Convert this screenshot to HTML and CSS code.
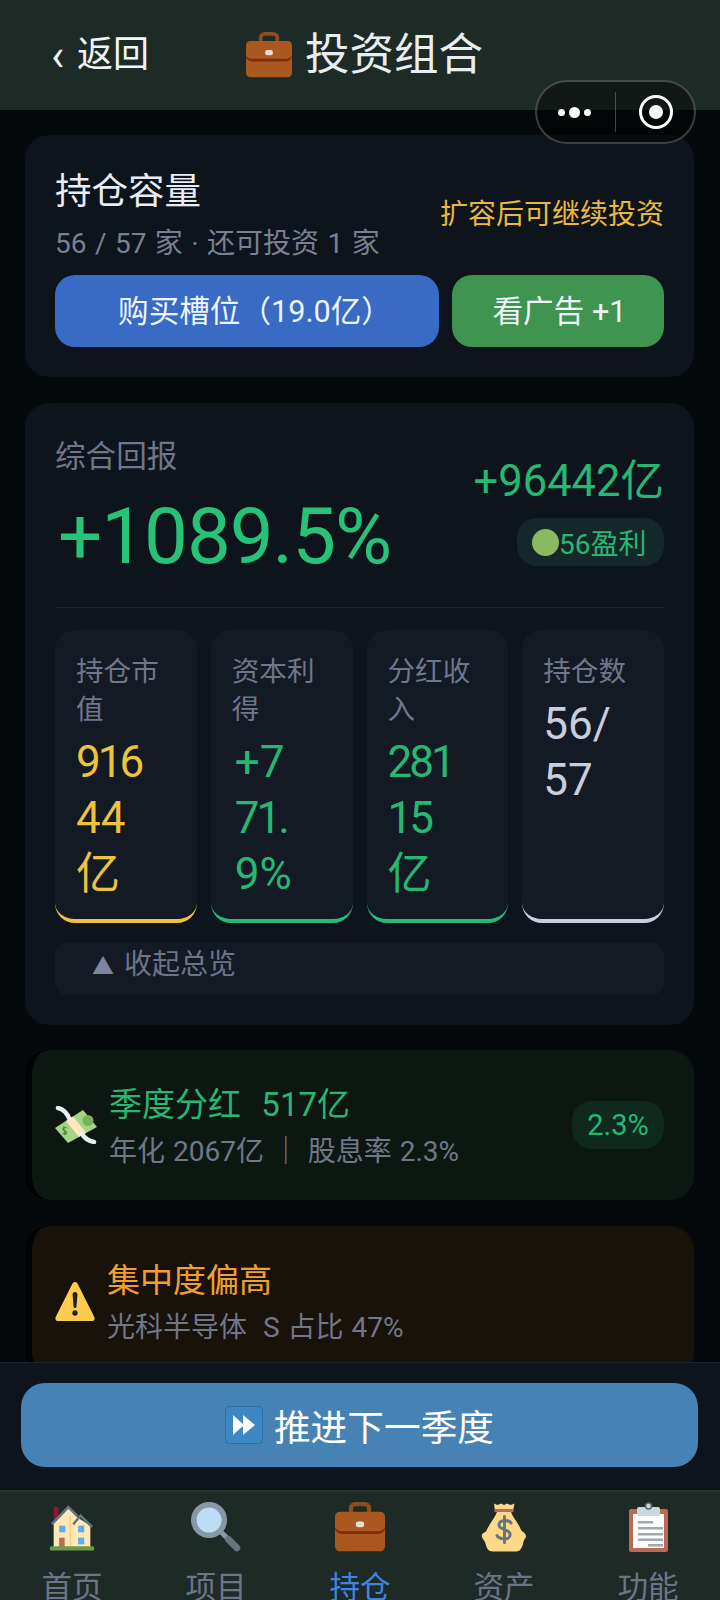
FILE: index.html
```html
<!DOCTYPE html>
<html lang="zh-CN">
<head>
<meta charset="utf-8">
<title>投资组合</title>
<link rel="stylesheet" href="styles.css">
</head>
<body>
<svg class="defs" width="0" height="0" aria-hidden="true">
  <symbol id="case" viewBox="0 0 36 36">
    <path fill="none" stroke="#8f4c1d" stroke-width="3" d="M11.5 9V4.5a3 3 0 0 1 3-3h7a3 3 0 0 1 3 3V9"/>
    <rect x="0" y="7" width="36" height="28.5" rx="3.5" fill="#a9591f"/>
    <path fill="#7c2c0b" d="M0 17v1.600c0 2.400 2 4.400 5 4.400h26c3 0 5-2 5-4.400V17c0 2.400-2 4-5 4H5c-3 0-5-1.600-5-4z"/>
    <rect x="15" y="14" width="6" height="4.200" rx="1.600" fill="#e8dcd2"/>
  </symbol>
</svg>

<div class="capsule">
  <div class="cap-dots"><i class="dot"></i><i class="dot dot-big"></i><i class="dot"></i></div>
  <i class="cap-line"></i>
  <div class="cap-target"><i class="cap-core"></i></div>
</div>

<header class="topbar">
  <div class="back"><span class="chev">‹</span>返回</div>
  <div class="title"><svg class="title-ico"><use href="#case"/></svg>投资组合</div>
</header>

<main class="scroll">
  <section class="card cap-card">
    <div class="cap-head">
      <div>
        <div class="cap-title">持仓容量</div>
        <div class="cap-sub">56 / 57 家 · 还可投资 1 家</div>
      </div>
      <div class="cap-note">扩容后可继续投资</div>
    </div>
    <div class="btns">
      <div class="btn btn-blue">购买槽位（19.0亿）</div>
      <div class="btn btn-green">看广告 +1</div>
    </div>
  </section>

  <section class="card sum-card">
    <div class="sum-head">
      <div>
        <div class="sum-label">综合回报</div>
        <div class="sum-big">+1089.5%</div>
      </div>
      <div class="sum-right">
        <div class="sum-amt">+96442亿</div>
        <div class="sum-pill"><i class="green-dot"></i>56盈利</div>
      </div>
    </div>
    <div class="stats">
      <div class="stat stat-gold"><div class="stat-l">持仓市<br>值</div><div class="stat-v v-gold"><span class="tight">916</span><br>44<br>亿</div></div>
      <div class="stat stat-green"><div class="stat-l">资本利<br>得</div><div class="stat-v v-green v-shift">+7<br><span class="tight">71.</span><br>9%</div></div>
      <div class="stat stat-green"><div class="stat-l">分红收<br>入</div><div class="stat-v v-green"><span class="tight">281</span><br><span class="tight">15</span><br>亿</div></div>
      <div class="stat stat-grey"><div class="stat-l">持仓数</div><div class="stat-v v-grey">56/<br>57</div></div>
    </div>
    <div class="toggle"><span class="tri">▲</span> 收起总览</div>
  </section>

  <section class="note note-green">
    <svg class="ico-money" viewBox="0 0 42 38">
      <path d="M0 22L28 4l14 17-29 16z" fill="#a6d388"/>
      <circle cx="33" cy="14.500" r="5.500" fill="#77b255"/>
      <path d="M11.500 22c-2-1.500-4.500 0-3 2 1.500 1.500 3.500 1 3 3-.5 1.500-3 1.500-4 0M8.500 20.500l1.500 8.500" fill="none" stroke="#4f8a35" stroke-width="1.300"/>
      <path d="M11 15l7-4.500L31 26.500 24 31z" fill="#ffe8b6"/>
      <path d="M14.500 13C12 7 8 3 3 2" fill="none" stroke="#e9eef2" stroke-width="4.500" stroke-linecap="round"/>
      <path d="M27 28c3 5 7 7 12 8" fill="none" stroke="#e9eef2" stroke-width="4.500" stroke-linecap="round"/>
    </svg>
    <div class="note-text">
      <div class="note-title t-green">季度分红&nbsp;&nbsp;517亿</div>
      <div class="note-sub">年化 2067亿 ｜ 股息率 2.3%</div>
    </div>
    <div class="rate">2.3%</div>
  </section>

  <section class="note note-amber">
    <svg class="ico-warn" viewBox="0 0 40 39">
      <path d="M20 0c1.300 0 2.200.8 2.900 2.300L39.300 35c.9 2-.2 4-2.300 4H3c-2.100 0-3.200-2-2.300-4L17.100 2.300C17.800.8 18.700 0 20 0z" fill="#ffcc4d"/>
      <path d="M17.600 12.500c0-1.500 1-2.500 2.400-2.500s2.400 1 2.400 2.500l-.9 12c-.1 1-.7 1.500-1.500 1.500s-1.400-.5-1.500-1.500z" fill="#231f20"/>
      <circle cx="20" cy="31" r="2.700" fill="#231f20"/>
    </svg>
    <div class="note-text">
      <div class="note-title t-amber">集中度偏高</div>
      <div class="note-sub">光科半导体&nbsp;&nbsp;S 占比 47%</div>
    </div>
  </section>
</main>

<div class="footer">
  <div class="next">
    <svg class="ico-ff" viewBox="0 0 38 38">
      <rect x=".5" y=".5" width="37" height="37" rx="4" fill="#3b88c3" stroke="#2f6ea3"/>
      <path d="M8 9l11 10-11 10z" fill="#fff"/>
      <path d="M18 9l12 10-12 10z" fill="#fff"/>
    </svg>
    <span>推进下一季度</span>
  </div>
</div>

<nav class="tabs">
  <div class="tab">
    <svg class="tab-ico ico-house" viewBox="0 0 36 36" preserveAspectRatio="none">
      <rect x="3" y="3" width="4" height="10" fill="#8f1634"/>
      <path d="M3 33V15L15 3l8 8 10 6v16z" fill="#ffe8b6"/>
      <rect x="16" y="10" width="1" height="23" fill="#ffcc7d"/>
      <path d="M1.500 16L15 3l7.500 7" fill="none" stroke="#66757f" stroke-width="2"/>
      <path d="M19 16l6-6.500L34.500 18" fill="none" stroke="#66757f" stroke-width="2"/>
      <rect x="7.500" y="17" width="5" height="5" fill="#5dadec"/>
      <rect x="23" y="17" width="5" height="5" fill="#5dadec"/>
      <rect x="23" y="26" width="5" height="5" fill="#5dadec"/>
      <rect x="7.500" y="26" width="4.500" height="7" fill="#c1694f"/>
      <rect x="0" y="32.500" width="36" height="3.200" rx="1" fill="#6a9c4b"/>
    </svg>
    <div class="tab-l">首页</div>
  </div>
  <div class="tab">
    <svg class="tab-ico ico-lens" viewBox="0 0 36 36">
      <path d="M22 22l4.500 4.500" stroke="#8899a6" stroke-width="3.500"/>
      <path d="M27 27l6 6" stroke="#66757f" stroke-width="5" stroke-linecap="round"/>
      <circle cx="13" cy="13" r="11" fill="#bbddf5" stroke="#8899a6" stroke-width="4"/>
    </svg>
    <div class="tab-l">项目</div>
  </div>
  <div class="tab">
    <svg class="tab-ico ico-case"><use href="#case"/></svg>
    <div class="tab-l tab-on">持仓</div>
  </div>
  <div class="tab">
    <svg class="tab-ico ico-bag" viewBox="0 0 46 50">
      <path d="M13 1.500l3.500 1.500 3.500-1.500 3 1.500 3-1.500 3.500 1.500 4-1.500-1.500 7.500H14z" fill="#fdd888"/>
      <rect x="13.500" y="7" width="19" height="3" fill="#bf6952"/>
      <path d="M16 10h14c2 6 7 10 10 18 1 1.500 5 3 5 6.500 0 1.500-2 3-2.500 5s-.5 4-2.500 7c-1 2-2.500 3-5 3H12c-3 0-5-1-6-3.500-1.500-3-1-5-3-7.500-2-2.500-2.500-4-2-6 .5-1.500 3-2 4-3C8 22 14 16 16 10z" fill="#fdd888"/>
      <path d="M30 21c-1.500-3-11-4-12 1.500-1 5.500 12.500 4.500 11 11-1 5-11 4-13 0M23.500 14.500v26" fill="none" stroke="#67757f" stroke-width="3" stroke-linecap="round"/>
    </svg>
    <div class="tab-l">资产</div>
  </div>
  <div class="tab">
    <svg class="tab-ico ico-clip" viewBox="0 0 39 50">
      <rect x="0" y="7" width="39" height="43" rx="2" fill="#bd6a55"/>
      <rect x="4" y="12" width="31" height="34" fill="#fff"/>
      <rect x="8" y="5" width="23" height="9" rx="2" fill="#ccd6dd"/>
      <circle cx="19.500" cy="4" r="3" fill="#ccd6dd" stroke="#55646e" stroke-width="1.500"/>
      <rect x="9" y="19" width="15" height="2.500" fill="#99aab5"/>
      <rect x="9" y="25" width="25" height="2.500" fill="#99aab5"/>
      <rect x="9" y="31" width="25" height="2.500" fill="#99aab5"/>
      <rect x="9" y="36.500" width="25" height="2.500" fill="#99aab5"/>
      <rect x="19" y="42" width="15" height="2.500" fill="#99aab5"/>
    </svg>
    <div class="tab-l">功能</div>
  </div>
</nav>
</body>
</html>
```

FILE: styles.css
```css
* { box-sizing: border-box; }
html, body { margin: 0; padding: 0; }
body {
  position: relative;
  width: 720px;
  height: 1600px;
  overflow: hidden;
  display: flex;
  flex-direction: column;
  background: #05090c;
  color: #e8ecf2;
  font-family: Roboto, "Noto Sans CJK SC", sans-serif;
}
i { display: block; }
.defs { position: absolute; }

/* top bar */
.topbar {
  flex: none;
  height: 110px;
  background: #1e2a25;
  display: flex;
  align-items: center;
  padding: 0 0 0 51px;
}
.back { width: 195px; font-size: 36px; line-height: 50px; color: #f2f5f7; display: flex; align-items: center; }
.chev { width: 26px; font-size: 44px; line-height: 44px; }
.title { display: flex; align-items: center; font-size: 44.500px; line-height: 60px; color: #e8edf2; }
.title-ico { width: 46px; height: 46px; margin-right: 13px; }

/* wechat capsule */
.capsule {
  position: absolute;
  left: 535px;
  top: 80px;
  width: 161px;
  height: 64px;
  border: 2px solid rgba(255, 255, 255, .22);
  border-radius: 32px;
  background: rgba(0, 0, 0, .42);
  display: flex;
  align-items: center;
}
.cap-dots { width: 78px; padding-right: 4px; display: flex; justify-content: center; align-items: center; gap: 4px; }
.dot { width: 7px; height: 7px; border-radius: 50%; background: #fff; }
.dot-big { width: 11px; height: 11px; }
.cap-line { width: 1px; height: 40px; background: rgba(255, 255, 255, .25); }
.cap-target {
  margin-left: 23px;
  width: 34px;
  height: 34px;
  border: 3.500px solid #fff;
  border-radius: 50%;
  display: flex;
  align-items: center;
  justify-content: center;
}
.cap-core { width: 14px; height: 14px; border-radius: 50%; background: #fff; }

/* scroll */
.scroll { flex: 1; min-height: 0; overflow: hidden; padding: 25px 26px 0 25px; }
.card { background: #0e141b; border-radius: 24px; padding: 32px 30px 30px; }

/* capacity card */
.cap-card { margin-bottom: 26px; }
.cap-head { display: flex; justify-content: space-between; align-items: center; }
.cap-title { font-size: 36.500px; line-height: 50px; color: #e8ecf4; }
.cap-sub { margin-top: 8px; font-size: 28px; line-height: 38px; word-spacing: 1.500px; color: #7b8090; }
.cap-note { font-size: 28px; line-height: 40px; color: #e8b93c; }
.btns { display: flex; gap: 13px; margin-top: 12px; }
.btn { height: 72px; padding-bottom: 4px; border-radius: 20px; display: flex; align-items: center; justify-content: center; font-size: 30.600px; color: #eef4fa; }
.btn-blue { width: 384px; padding-left: 16px; background: #3a6bc4; }
.btn-green { width: 212px; padding-left: 3px; background: #3f9550; }

/* summary card */
.sum-card { margin-bottom: 25px; }
.sum-head { display: flex; justify-content: space-between; padding-bottom: 20px; border-bottom: 1px solid #1a2430; }
.sum-label { font-size: 30.600px; line-height: 44px; color: #71768a; }
.sum-big { margin: 8px 0 0 3px; font-size: 78px; line-height: 100px; letter-spacing: -1px; color: #26c278; }
.sum-right { display: flex; flex-direction: column; align-items: flex-end; padding-top: 17px; }
.sum-amt { font-size: 43.500px; line-height: 60px; color: #26b873; }
.sum-pill {
  margin-top: 6px;
  height: 48px;
  padding: 0 16px 0 15px;
  width: 147px;
  border-radius: 20px;
  background: #14282a;
  display: flex;
  align-items: center;
  font-size: 28px;
  color: #26b873;
}
.green-dot { flex: none; width: 27px; height: 27px; border-radius: 50%; background: #8aba60; }

.stats { display: grid; grid-template-columns: repeat(4, 1fr); gap: 14px; margin-top: 22px; }
.stat { height: 293px; padding: 23px 10px 0 21px; background: #131a24; border-radius: 20px; border-bottom: 4px solid; }
.stat-gold { border-color: #eec23c; }
.stat-green { border-color: #2bb778; }
.stat-grey { border-color: #c9cede; }
.stat-l { font-size: 27.600px; line-height: 38px; color: #71768a; }
.stat-v { margin-top: 5px; font-size: 44px; line-height: 56px; }
.tight { letter-spacing: -3px; }
.v-shift { margin-left: 3px; }
.v-gold { color: #eec23c; }
.v-green { color: #26b873; }
.v-grey { color: #c9cede; }

.toggle {
  margin-top: 20px;
  height: 52px;
  padding-left: 37px;
  border-radius: 12px;
  background: #131a24;
  font-size: 28px;
  line-height: 44px;
  word-spacing: 3px;
  color: #6e7488;
}
.tri { color: #80859f; font-size: 22px; }

/* notes */
.note { display: flex; align-items: center; height: 150px; margin-bottom: 26px; padding-left: 23px; border-left: 7px solid #010203; border-radius: 24px; }
.note-green { background: #0d1712; }
.note-amber { background: #18120a; }
.ico-money { flex: none; width: 42px; height: 38px; margin-right: 12px; }
.ico-warn { flex: none; width: 40px; height: 39px; margin-right: 12px; }
.note-text { flex: 1; padding-top: 4px; }
.note-title { font-size: 33px; line-height: 44px; word-spacing: 2px; }
.t-green { color: #26b873; }
.t-amber { color: #f0a030; }
.note-sub { margin-top: 5px; font-size: 28px; line-height: 40px; word-spacing: 1px; color: #71768a; }
.rate {
  margin-right: 30px;
  width: 92px;
  height: 48px;
  border-radius: 20px;
  background: #10291e;
  display: flex;
  align-items: center;
  justify-content: center;
  font-size: 29px;
  color: #26b873;
}

/* footer */
.footer { flex: none; height: 128px; padding: 20px 22px 0 21px; background: #0d141b; border-top: 1px solid #1a2430; }
.next {
  height: 84px;
  border-radius: 24px;
  background: #4682b4;
  display: flex;
  align-items: center;
  justify-content: center;
  gap: 11px;
  font-size: 36.700px;
  color: #fff;
}
.ico-ff { width: 38px; height: 38px; }

/* tabs */
.tabs { flex: none; height: 110px; overflow: hidden; display: flex; background: #1e2a25; border-top: 2px solid #26332f; padding-top: 10px; }
.tab { width: 144px; display: flex; flex-direction: column; align-items: center; }
.tab-ico { display: block; flex: none; height: 50px; }
.ico-house { width: 44px; height: 48px; margin-top: 1px; margin-bottom: 1px; }
.ico-lens { width: 50px; }
.ico-case { width: 50px; }
.ico-bag { width: 46px; }
.ico-clip { width: 39px; }
.tab-l { flex: none; margin-top: 16px; font-size: 30.600px; line-height: 40px; color: #6e7488; }
.tab-on { color: #3f84e0; }
```
